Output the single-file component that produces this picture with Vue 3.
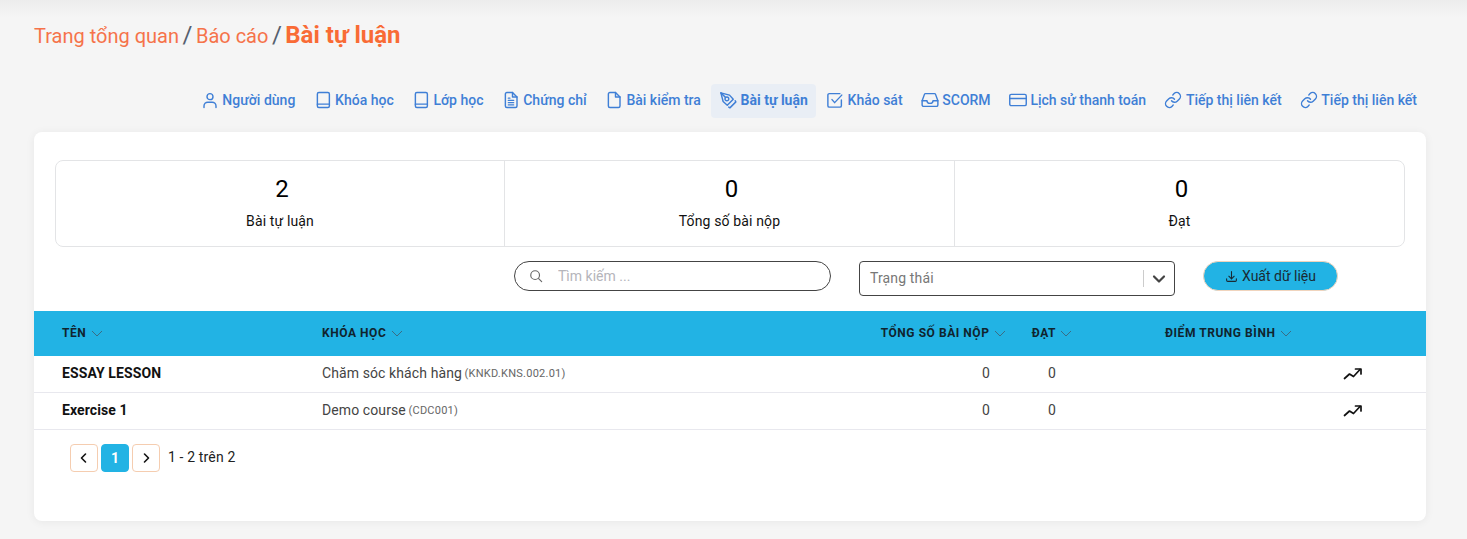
<script setup>
const icons = {
  person: ["M12 3.500a4 4 0 1 0 0 8 4 4 0 0 0 0-8z", "M4 22v-2a5 5 0 0 1 5-5h6a5 5 0 0 1 5 5v2"],
  book: ["M6.500 2h12a2 2 0 0 1 2 2v16a2 2 0 0 1-2 2h-12a2 2 0 0 1-2-2V4a2 2 0 0 1 2-2z", "M4.500 17.500h16"],
  fileText: ["M14 2H6.500a2 2 0 0 0-2 2v16a2 2 0 0 0 2 2h11.500a2 2 0 0 0 2-2V8z", "M14 2v6h6", "M8.500 12.500h7", "M8.500 15.500h7", "M8.500 18.500h7", "M8.500 9.500h2"],
  file: ["M14 2H6.500a2 2 0 0 0-2 2v16a2 2 0 0 0 2 2h11.500a2 2 0 0 0 2-2V8z", "M14 2v6h6"],
  pen: ["M2.500 2.500l11.500 3 5 5.500-8 8-5.500-5z", "M2.500 2.500l6.300 6.300", "M10.500 8a2.500 2.500 0 1 0 0 5 2.500 2.500 0 0 0 0-5z", "M13 21.500l1.500 1 8-8-1-1.500"],
  check: ["M20.500 12v7.500a2 2 0 0 1-2 2h-14a2 2 0 0 1-2-2v-14a2 2 0 0 1 2-2h14", "M8 11.500l3.500 4 9.500-10"],
  inbox: ["M6 3.500h12a1.500 1.500 0 0 1 1.400 1l3.100 8.500v5.500a2 2 0 0 1-2 2H3.500a2 2 0 0 1-2-2V13l3.100-8.500A1.500 1.500 0 0 1 6 3.500z", "M1.500 13h6.500a4 3.500 0 0 0 8 0h6.500"],
  card: ["M3 4.500h18a2 2 0 0 1 2 2v11a2 2 0 0 1-2 2H3a2 2 0 0 1-2-2v-11a2 2 0 0 1 2-2z", "M1 10h22"],
  link: ["M10 13a5 5 0 0 0 7.540.540l3-3a5 5 0 0 0-7.070-7.070l-1.720 1.710", "M14 11a5 5 0 0 0-7.540-.540l-3 3a5 5 0 0 0 7.070 7.070l1.710-1.710"],
};

const navItems = [
  { label: "Người dùng", icon: "person" },
  { label: "Khóa học", icon: "book" },
  { label: "Lớp học", icon: "book" },
  { label: "Chứng chỉ", icon: "fileText" },
  { label: "Bài kiểm tra", icon: "file" },
  { label: "Bài tự luận", icon: "pen", active: true },
  { label: "Khảo sát", icon: "check" },
  { label: "SCORM", icon: "inbox" },
  { label: "Lịch sử thanh toán", icon: "card" },
  { label: "Tiếp thị liên kết", icon: "link" },
  { label: "Tiếp thị liên kết", icon: "link" },
];

const stats = [
  { value: 2, label: "Bài tự luận" },
  { value: 0, label: "Tổng số bài nộp" },
  { value: 0, label: "Đạt" },
];

const rows = [
  { name: "ESSAY LESSON", course: "Chăm sóc khách hàng", code: "(KNKD.KNS.002.01)", submitted: 0, passed: 0 },
  { name: "Exercise 1", course: "Demo course", code: "(CDC001)", submitted: 0, passed: 0 },
];
</script>

<template>
  <div class="page">
    <h1 class="crumbs">
      <a>Trang tổng quan</a>
      <span class="sep">/</span>
      <a>Báo cáo</a>
      <span class="sep">/</span>
      <strong>Bài tự luận</strong>
    </h1>

    <nav class="tabs">
      <a
        v-for="(item, i) in navItems"
        :key="i"
        class="tab"
        :class="{ active: item.active }"
      >
        <svg class="tab-icon" viewBox="0 0 24 24" fill="none" stroke="currentColor" stroke-width="1.900" stroke-linecap="round" stroke-linejoin="round">
          <path v-for="d in icons[item.icon]" :key="d" :d="d" />
        </svg>
        {{ item.label }}
      </a>
    </nav>

    <section class="card">
      <div class="card-top">
        <div class="stats">
          <div v-for="s in stats" :key="s.label" class="stat">
            <div class="stat-value">{{ s.value }}</div>
            <div class="stat-label">{{ s.label }}</div>
          </div>
        </div>

        <div class="toolbar">
          <label class="search">
            <svg class="search-icon" viewBox="0 0 16 16" fill="none" stroke="currentColor" stroke-width="1.300" stroke-linecap="round">
              <circle cx="7" cy="7" r="5" />
              <path d="M11 11l3.500 3.500" />
            </svg>
            <input type="text" placeholder="Tìm kiếm ..." />
          </label>

          <div class="select">
            <span class="select-text">Trạng thái</span>
            <span class="select-sep"></span>
            <svg class="select-arrow" viewBox="0 0 16 16" fill="none" stroke="currentColor" stroke-width="2.200" stroke-linecap="round" stroke-linejoin="round">
              <path d="M3 5.500l5 5 5-5" />
            </svg>
          </div>

          <button class="export">
            <svg class="export-icon" viewBox="0 0 24 24" fill="none" stroke="currentColor" stroke-width="2" stroke-linecap="round" stroke-linejoin="round">
              <path d="M12 3v13" />
              <path d="M7 11.500l5 5 5-5" />
              <path d="M3 16v3a2 2 0 0 0 2 2h14a2 2 0 0 0 2-2v-3" />
            </svg>
            Xuất dữ liệu
          </button>
        </div>
      </div>

      <div class="table">
        <div class="row head">
          <div class="cell">TÊN <svg class="sort" viewBox="0 0 12 12"><path d="M1 4l5 5 5-5" /></svg></div>
          <div class="cell">KHÓA HỌC <svg class="sort" viewBox="0 0 12 12"><path d="M1 4l5 5 5-5" /></svg></div>
          <div class="cell end">TỔNG SỐ BÀI NỘP <svg class="sort" viewBox="0 0 12 12"><path d="M1 4l5 5 5-5" /></svg></div>
          <div class="cell mid">ĐẠT <svg class="sort" viewBox="0 0 12 12"><path d="M1 4l5 5 5-5" /></svg></div>
          <div class="cell score">ĐIỂM TRUNG BÌNH <svg class="sort" viewBox="0 0 12 12"><path d="M1 4l5 5 5-5" /></svg></div>
          <div class="cell"></div>
        </div>

        <div v-for="r in rows" :key="r.name" class="row body">
          <div class="cell name">{{ r.name }}</div>
          <div class="cell course">{{ r.course }}&nbsp;<small>{{ r.code }}</small></div>
          <div class="cell end num">{{ r.submitted }}</div>
          <div class="cell mid">{{ r.passed }}</div>
          <div class="cell score"></div>
          <div class="cell mid">
            <svg class="trend" viewBox="0 0 20 20" fill="none" stroke="currentColor" stroke-width="1.700" stroke-linecap="round" stroke-linejoin="round">
              <path d="M1.500 15.500l5-4.500 4 2.500 6.500-7" />
              <path d="M12.500 6h5.500v5" />
            </svg>
          </div>
        </div>
      </div>

      <div class="pager">
        <button class="page-btn">
          <svg viewBox="0 0 12 12" fill="none" stroke="currentColor" stroke-width="1.600" stroke-linecap="round" stroke-linejoin="round"><path d="M7.500 2l-4 4 4 4" /></svg>
        </button>
        <button class="page-btn current">1</button>
        <button class="page-btn">
          <svg viewBox="0 0 12 12" fill="none" stroke="currentColor" stroke-width="1.600" stroke-linecap="round" stroke-linejoin="round"><path d="M4.500 2l4 4-4 4" /></svg>
        </button>
        <span class="page-info">1 - 2 trên 2</span>
      </div>
    </section>
  </div>
</template>

<style>
html,
body {
  margin: 0;
  background: #f5f5f5;
}
</style>

<style scoped>
.page {
  box-sizing: border-box;
  height: 539px;
  overflow: hidden;
  padding: 20px 41px 18px 34px;
  background: linear-gradient(#ececec 0, #f5f5f5 18px);
  font-family: Roboto, "Noto Sans", sans-serif;
  color: #222;
}

.crumbs {
  margin: 0;
  height: 30px;
  line-height: 30px;
  font-size: 20px;
  font-weight: 400;
  color: #f5734a;
  display: flex;
  gap: 3.5px;
  align-items: baseline;
}
.crumbs strong {
  font-size: 24px;
  font-weight: 700;
  color: #f96b35;
}
.crumbs .sep {
  color: #55606e;
  font-size: 24px;
  font-weight: 400;
}

.tabs {
  margin-top: 34px;
  margin-right: 1px;
  display: flex;
  justify-content: flex-end;
  gap: 2.25px;
}
.tab {
  box-sizing: border-box;
  display: flex;
  align-items: center;
  height: 34px;
  padding: 0 8px 2px;
  border-radius: 4px;
  font-size: 14px;
  font-weight: 500;
  color: #3f7fd6;
  white-space: nowrap;
}
.tab.active {
  background: #e9eef5;
  font-weight: 700;
}
.tab-icon {
  width: 18px;
  height: 18px;
  margin-right: 3.5px;
  flex: none;
}

.card {
  margin-top: 14px;
  height: 389px;
  background: #fff;
  border-radius: 8px;
  box-shadow: 0 1px 10px rgba(0, 0, 0, 0.06);
  overflow: hidden;
}
.card-top {
  padding: 28px 21px 0;
}

.stats {
  display: grid;
  grid-template-columns: 448px 450px 1fr;
  border: 1px solid #e3e4e6;
  border-radius: 8px;
  height: 87px;
  box-sizing: border-box;
}
.stat {
  text-align: center;
  padding-top: 13px;
  color: #111;
}
.stat + .stat {
  border-left: 1px solid #e3e4e6;
}
.stat-value {
  padding-left: 4px;
  font-size: 24px;
  font-weight: 400;
  line-height: 30px;
  color: #000;
}
.stat-label {
  margin-top: 7px;
  font-size: 14px;
  line-height: 20px;
  letter-spacing: 0.01em;
}

.toolbar {
  margin-top: 14px;
  margin-right: 67px;
  display: flex;
  justify-content: flex-end;
  align-items: flex-start;
  gap: 28px;
}
.search {
  box-sizing: border-box;
  width: 317px;
  height: 30px;
  display: flex;
  align-items: center;
  padding: 0 14px;
  border: 1px solid #444;
  border-radius: 15px;
}
.search-icon {
  width: 14px;
  height: 14px;
  color: #666;
  flex: none;
}
.search input {
  flex: 1;
  min-width: 0;
  margin-left: 15px;
  border: 0;
  outline: 0;
  padding: 0;
  font: 14px Roboto, sans-serif;
  background: transparent;
}
.search input::placeholder {
  color: #b5b5bb;
}
.select {
  box-sizing: border-box;
  width: 316px;
  height: 35px;
  display: flex;
  align-items: center;
  padding: 0 7px 0 10px;
  border: 1px solid #444;
  border-radius: 4px;
}
.select-text {
  flex: 1;
  padding-bottom: 2px;
  font-size: 14px;
  letter-spacing: 0.01em;
  color: #777;
}
.select-sep {
  width: 1px;
  height: 17px;
  background: #ccc;
}
.select-arrow {
  width: 16px;
  height: 16px;
  margin-left: 7px;
  color: #444;
}
.export {
  box-sizing: border-box;
  width: 135px;
  height: 30px;
  display: flex;
  align-items: center;
  justify-content: center;
  gap: 4px;
  padding: 0;
  border: 1px solid #f0d4bd;
  border-radius: 15px;
  background: #22b3e4;
  color: #1a2a33;
  font: 14px Roboto, sans-serif;
}
.export-icon {
  width: 13px;
  height: 13px;
}

.table {
  margin-top: 15px;
}
.row {
  display: grid;
  grid-template-columns: 260px 528px 156px 92px 222px 66px;
  padding-left: 28px;
  align-items: center;
}
.head {
  height: 45px;
  padding-bottom: 1px;
  box-sizing: border-box;
  background: #22b3e4;
  font-size: 12px;
  font-weight: 700;
  letter-spacing: 0.55px;
  color: #10242e;
}
.body {
  height: 37px;
  box-sizing: border-box;
  padding-bottom: 2px;
  border-bottom: 1px solid #e8e8ee;
  font-size: 14px;
  letter-spacing: 0.1px;
  color: #444;
}
.cell {
  display: flex;
  align-items: center;
  white-space: pre;
}
.cell.end {
  justify-content: flex-end;
}
.cell.num {
  padding-right: 16px;
}
.cell.mid {
  justify-content: center;
}
.cell.score {
  padding-left: 67px;
}
.sort {
  width: 12px;
  height: 12px;
  margin-left: 1px;
  fill: none;
  stroke: #3a6d85;
  stroke-width: 1;
}
.name {
  font-weight: 700;
  color: #111;
}
.course small {
  margin-left: -1px;
  font-size: 11px;
  color: #666;
  letter-spacing: 0.25px;
}
.trend {
  width: 20px;
  height: 20px;
  color: #111;
}

.pager {
  margin-top: 14px;
  margin-left: 36px;
  display: flex;
  align-items: center;
  gap: 3px;
}
.page-btn {
  box-sizing: border-box;
  width: 28px;
  height: 28px;
  padding: 0;
  display: flex;
  align-items: center;
  justify-content: center;
  border: 1px solid #f5cdb0;
  border-radius: 4px;
  background: #fff;
  color: #111;
}
.page-btn svg {
  width: 12px;
  height: 12px;
}
.page-btn.current {
  background: #22b3e4;
  border-color: #22b3e4;
  color: #fff;
  font: 700 14px Roboto, sans-serif;
}
.page-info {
  margin-left: 5px;
  padding-bottom: 2px;
  font-size: 14px;
  letter-spacing: 0.01em;
  color: #222;
}
</style>
